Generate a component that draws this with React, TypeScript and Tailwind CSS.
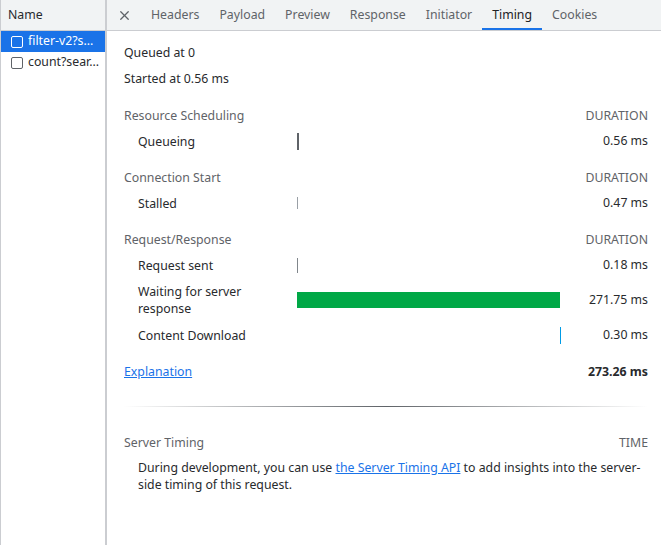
import { X } from 'lucide-react'

type Row = {
  label: string
  bar: React.ReactNode
  value: string
  tall?: boolean
}

type Section = {
  title: string
  rows: Row[]
}

const font = { fontFamily: '"Noto Sans", "Segoe UI", sans-serif' }

const tabs = ['Headers', 'Payload', 'Preview', 'Response', 'Initiator', 'Timing', 'Cookies']

const sections: Section[] = [
  {
    title: 'Resource Scheduling',
    rows: [
      {
        label: 'Queueing',
        bar: <div className="h-[17px] w-[2px] bg-[#5f6368]" />,
        value: '0.56 ms'
      }
    ]
  },
  {
    title: 'Connection Start',
    rows: [
      {
        label: 'Stalled',
        bar: <div className="h-[12px] w-px bg-[#9aa0a6]" />,
        value: '0.47 ms'
      }
    ]
  },
  {
    title: 'Request/Response',
    rows: [
      {
        label: 'Request sent',
        bar: <div className="h-[15px] w-px bg-[#80868b]" />,
        value: '0.18 ms'
      },
      {
        label: 'Waiting for server response',
        bar: <div className="h-[16px] w-[263px] bg-[#00a846]" />,
        value: '271.75 ms',
        tall: true
      },
      {
        label: 'Content Download',
        bar: (
          <div className="flex w-[264px] justify-end">
            <div className="h-[17px] w-px bg-[#009be6]" />
          </div>
        ),
        value: '0.30 ms'
      }
    ]
  }
]

function SectionHeader({ title, right }: { title: string; right: string }) {
  return (
    <div className="flex h-[24px] items-center justify-between text-[#5f6368]">
      <span>{title}</span>
      <span>{right}</span>
    </div>
  )
}

export default function App() {
  return (
    <div
      className="flex h-[545px] w-[661px] overflow-hidden bg-white text-[12.3px] text-[#282a2d]"
      style={font}
    >
      <div className="flex w-[107px] shrink-0 flex-col border-l border-r-2 border-[#cbcdd1]">
        <div className="flex h-[31px] items-center border-b border-[#cbcdd1] bg-[#f1f3f4] pl-[7px] pt-[1px]">
          Name
        </div>
        <div className="flex h-[21px] items-center gap-[5px] bg-[#1a73e8] pl-[10px] text-white">
          <div className="h-[12px] w-[12px] shrink-0 rounded-[2px] border border-white" />
          <span className="truncate">filter-v2?s...</span>
        </div>
        <div className="flex h-[21px] items-center gap-[5px] pl-[10px]">
          <div className="h-[12px] w-[12px] shrink-0 rounded-[2px] border border-[#5f6368]" />
          <span className="truncate">count?sear...</span>
        </div>
      </div>

      <div className="flex min-w-0 flex-1 flex-col">
        <div className="flex h-[31px] shrink-0 items-stretch border-b border-[#cbcdd1] bg-[#f1f3f4]">
          <div className="flex w-[34px] items-center justify-center">
            <X className="size-[15px] text-[#5f6368]" strokeWidth={2} />
          </div>
          {tabs.map((tab) => (
            <div
              key={tab}
              className={`flex items-center border-b-2 px-[10px] pt-[3px] ${
                tab === 'Timing'
                  ? 'border-[#1a73e8] text-[#202124]'
                  : 'border-transparent text-[#5f6368]'
              }`}
            >
              {tab}
            </div>
          ))}
        </div>

        <div className="flex flex-col pl-[17px] pr-[13px] pt-[9px]">
          <div className="flex h-[26px] items-center">Queued at 0</div>
          <div className="flex h-[26px] items-center">Started at 0.56 ms</div>

          {sections.map((section) => (
            <div key={section.title} className="mt-[12px] flex flex-col">
              <SectionHeader title={section.title} right="DURATION" />
              {section.rows.map((row) => (
                <div
                  key={row.label}
                  className={`grid grid-cols-[173px_1fr_auto] items-center ${
                    row.tall ? 'h-[44px]' : 'h-[26px]'
                  }`}
                >
                  <span className="pl-[14px] pr-[20px] leading-[17px]">{row.label}</span>
                  <div className="flex items-center">{row.bar}</div>
                  <span>{row.value}</span>
                </div>
              ))}
            </div>
          ))}

          <div className="mt-[12px] flex h-[24px] items-center justify-between">
            <a href="#" className="text-[#1a73e8] underline">
              Explanation
            </a>
            <span className="font-bold">273.26 ms</span>
          </div>

          <div className="mt-[22px] h-px bg-[linear-gradient(to_right,#ffffff,#5f6368,#ffffff)]" />

          <div className="mt-[24px] flex flex-col">
            <SectionHeader title="Server Timing" right="TIME" />
            <p className="pl-[14px] pt-[4px] leading-[17px]">
              During development, you can use{' '}
              <a href="#" className="text-[#1a73e8] underline">
                the Server Timing API
              </a>{' '}
              to add insights into the server-side timing of this request.
            </p>
          </div>
        </div>
      </div>
    </div>
  )
}
